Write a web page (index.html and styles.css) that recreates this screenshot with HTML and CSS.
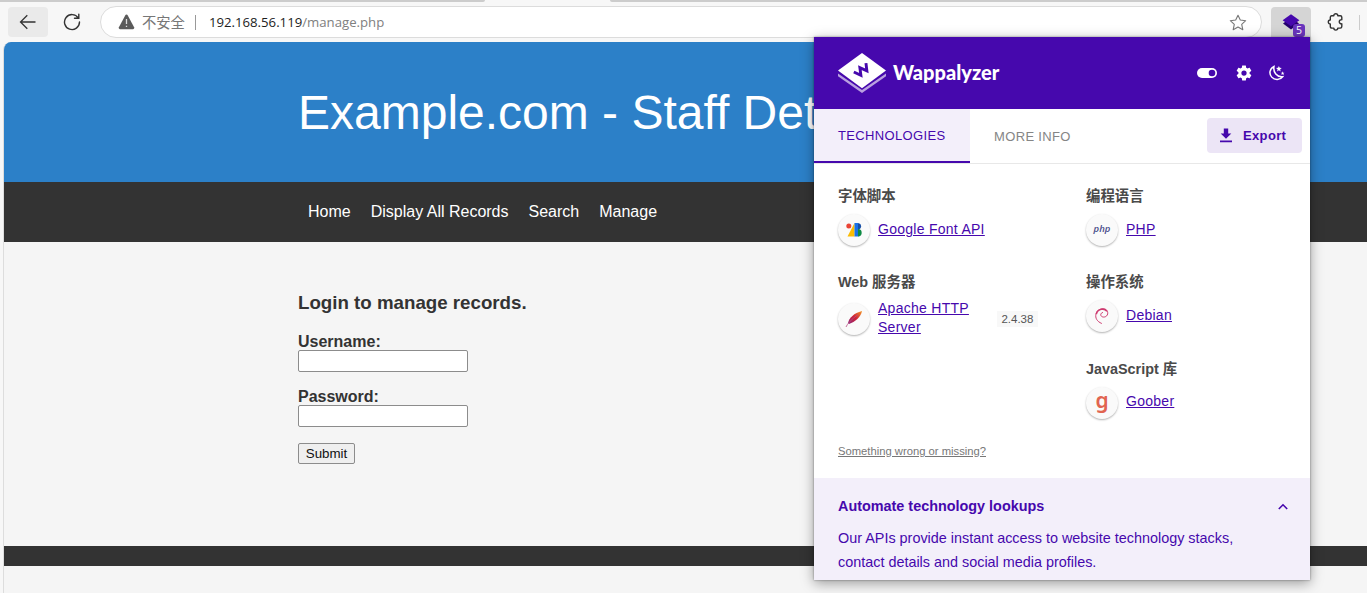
FILE: index.html
```html
<!DOCTYPE html>
<html lang="zh">
<head>
<meta charset="utf-8">
<title>Example.com - Staff Details</title>
<link rel="stylesheet" href="styles.css">
</head>
<body>
<div class="tabstrip"><span class="tab-left"></span><span class="tab-right"></span></div>
<div class="toolbar">
  <span class="back"><svg width="18" height="16" viewBox="0 0 18 16"><path d="M16.5 8H1.5M8.3 1.2 1.5 8l6.8 6.8" fill="none" stroke="#333" stroke-width="1.3"/></svg></span>
  <svg class="reload" width="18" height="18" viewBox="0 0 18 18"><path d="M15.3 5A7.5 7.5 0 1 0 16.500 9M15.800 1.300V5.300H11.500" fill="none" stroke="#333" stroke-width="1.4" stroke-linecap="round"/></svg>
  <div class="address">
    <svg width="17" height="16" viewBox="0 0 17 16"><path d="M8.500 .6Q9.300 .6 9.800 1.500L16.100 13.300Q16.700 15 15.100 15.200H1.900Q.3 15 .9 13.300L7.200 1.500Q7.700 .6 8.500 .6Z" fill="#5a5a5a"/><path d="M8.500 5v5M8.500 11.700v1.300" stroke="#ddd" stroke-width="1.300"/></svg>
    <span class="insecure">不安全</span><span class="divider"></span>
    <span class="url"><b>192.168.56.119</b>/manage.php</span>
    <svg class="star" width="18" height="17" viewBox="0 0 18 17"><path d="M9 1.200 11.300 6l5.400.7-4 3.700 1.100 5.300L9 13.100l-4.800 2.600 1.100-5.300-4-3.700L6.700 6Z" fill="none" stroke="#777" stroke-width="1.100" stroke-linejoin="round"/></svg>
  </div>
  <span class="extension">
    <svg width="18" height="16" viewBox="0 0 18 16"><path d="M9 3.500 17 9.500 9 15.500 1 9.500Z" fill="#25006e"/><path d="M9 .3 17.400 6.300 9 12.300 .6 6.300Z" fill="#4608ad"/></svg>
    <span class="count">5</span>
  </span>
  <svg class="puzzle" width="18" height="18" viewBox="0 0 18 18"><path d="M4.500 2.700H6.800A2 2 0 0 1 10.800 2.700H13.300Q14.800 2.700 14.800 4.200V6.700A2.100 2.100 0 1 0 14.800 10.800V13.600Q14.800 15.100 13.300 15.100H10.800A2 2 0 0 1 6.800 15.100H4.800Q3.300 15.100 3.300 13.600V11A2 2 0 0 1 3.300 7V4.200Q3.300 2.700 4.800 2.700Z" fill="none" stroke="#333" stroke-width="1.400" stroke-linejoin="round"/></svg>
  <span class="edge"></span>
</div>
<div class="site">
  <header>Example.com - Staff Det</header>
  <nav><a>Home</a><a>Display All Records</a><a>Search</a><a>Manage</a></nav>
  <main>
    <h3>Login to manage records.</h3>
    <label>Username:</label><input type="text">
    <label>Password:</label><input type="password">
    <button class="submit">Submit</button>
  </main>
  <footer></footer>
</div>
<section class="popup">
  <div class="brand">
    <svg width="48" height="42" viewBox="0 0 48 42"><path d="M0 21.500 24 38 48 21.500V24.300L24 41 0 24.300Z" fill="#b9a0e0"/><path d="M24 1 48 18.500 24 36.300 0 18.500Z" fill="#fff"/><path d="M-7.500 -3.600-3.700 3.200 0 -3.600 3.700 3.200 7.500 -3.600" transform="translate(24 18.500) rotate(-36)" fill="none" stroke="#4608ad" stroke-width="2.900"/></svg>
    <span class="name">Wappalyzer</span>
    <svg class="toggle" width="20" height="12" viewBox="0 0 20 12"><rect x="0" y="1" width="20" height="10" rx="5" fill="#fff"/><circle cx="15" cy="6" r="3.300" fill="#4608ad"/></svg>
    <svg class="gear" width="18" height="18" viewBox="0 0 24 24"><path fill="#fff" d="M12 15.500A3.500 3.500 0 0 1 8.500 12 3.500 3.500 0 0 1 12 8.500 3.500 3.500 0 0 1 15.500 12 3.500 3.500 0 0 1 12 15.500M19.430 12.970C19.470 12.650 19.500 12.330 19.500 12S19.470 11.340 19.430 11L21.540 9.370C21.730 9.220 21.780 8.950 21.660 8.730L19.660 5.270C19.540 5.050 19.270 4.960 19.050 5.050L16.560 6.050C16.040 5.660 15.500 5.320 14.870 5.070L14.500 2.420C14.460 2.180 14.250 2 14 2H10C9.750 2 9.540 2.180 9.500 2.420L9.130 5.070C8.500 5.320 7.960 5.660 7.440 6.050L4.950 5.050C4.730 4.960 4.460 5.050 4.340 5.270L2.340 8.730C2.210 8.950 2.270 9.220 2.460 9.370L4.570 11C4.530 11.340 4.500 11.670 4.500 12S4.530 12.650 4.570 12.970L2.460 14.630C2.270 14.780 2.210 15.050 2.340 15.270L4.340 18.730C4.460 18.950 4.730 19.030 4.950 18.950L7.440 17.940C7.960 18.340 8.500 18.680 9.130 18.930L9.500 21.580C9.540 21.820 9.750 22 10 22H14C14.250 22 14.460 21.820 14.500 21.580L14.870 18.930C15.500 18.670 16.040 18.340 16.560 17.940L19.050 18.950C19.270 19.030 19.540 18.950 19.660 18.730L21.660 15.270C21.780 15.050 21.730 14.780 21.540 14.630Z"/></svg>
    <svg class="moon" width="18" height="18" viewBox="0 0 24 24"><path d="M8 3.300C2 6 1 13 5 17.500 9 22 16 21.700 19.500 17 12 18 6.500 11 8 3.300Z" fill="none" stroke="#fff" stroke-width="2"/><path fill="#fff" d="m14.500 2.500 1.100 2.600 2.800.2-2.200 1.800.7 2.800-2.400-1.500-2.400 1.500.7-2.800-2.200-1.800 2.800-.2ZM19.500 9.800l.7 1.700 1.800.1-1.400 1.200.5 1.800-1.600-1-1.600 1 .5-1.800-1.400-1.200 1.800-.1Z"/></svg>
  </div>
  <div class="tabs">
    <span class="tab active">TECHNOLOGIES</span><span class="tab">MORE INFO</span>
    <span class="export"><svg width="12" height="15" viewBox="0 0 12 15"><path d="M3.800 .5H8.200V5.500H11.300L6 10.800.7 5.500H3.800ZM0 12.600H12V14.200H0Z" fill="#4608ad"/></svg>Export</span>
  </div>
  <div class="tech">
    <div class="column">
      <div class="group"><h4>字体脚本</h4><div class="item"><i class="badge"><svg width="17" height="14" viewBox="0 0 17 14"><path d="M8.500 0V13.500H1.500Z" fill="#fbbc04"/><circle cx="2.800" cy="3" r="2.500" fill="#ea4335"/><path d="M8.500 0H12.500V13.500H8.500Z" fill="#1a73e8"/><path d="M12 .2A3.100 3.100 0 0 1 12 6.400Z" fill="#174ea6"/><path d="M12 6A3.700 3.700 0 0 1 12 13.400Z" fill="#0d8a43"/></svg></i><a>Google Font API</a></div></div>
      <div class="group tall"><h4>Web 服务器</h4><div class="item"><i class="badge"><svg width="18" height="18" viewBox="0 0 18 18"><defs><linearGradient id="feather" x1="0" y1="1" x2="1" y2="0"><stop offset="0" stop-color="#89277f"/><stop offset=".5" stop-color="#d02235"/><stop offset="1" stop-color="#f39a27"/></linearGradient></defs><path d="M3 13C4 8 9 3 17 1 16 7 10 12 4 14Z" fill="url(#feather)"/><path d="M1 17Q3 12 13 4.500" fill="none" stroke="#b64f83" stroke-width=".8"/></svg></i><a>Apache HTTP<br>Server</a><span class="version">2.4.38</span></div></div>
    </div>
    <div class="column">
      <div class="group"><h4>编程语言</h4><div class="item"><i class="badge php">php</i><a>PHP</a></div></div>
      <div class="group"><h4>操作系统</h4><div class="item"><i class="badge"><svg width="16" height="18" viewBox="0 0 16 18"><path d="M7.800 16.500C3 14.500 1 11 2 7 3.300 1.500 10.500.2 13.300 4.200 15 8 11.500 11 8.300 9.800 6 8.800 6.300 6 9 5.400" fill="none" stroke="#ce3b70" stroke-width="1"/><path d="M2.300 7C3.800 1.600 10.500.8 13 4.300" fill="none" stroke="#ce3b70" stroke-width="1.600"/></svg></i><a>Debian</a></div></div>
      <div class="group"><h4>JavaScript 库</h4><div class="item"><i class="badge goober">g</i><a>Goober</a></div></div>
    </div>
  </div>
  <a class="missing">Something wrong or missing?</a>
  <div class="promo">
    <div class="promo-title">Automate technology lookups<svg width="10" height="7" viewBox="0 0 10 7"><path d="M.8 6 5 1.800 9.200 6" fill="none" stroke="#4608ad" stroke-width="1.600"/></svg></div>
    <p>Our APIs provide instant access to website technology stacks,<br>contact details and social media profiles.</p>
  </div>
</section>
</body>
</html>
```
FILE: styles.css
```css
* { box-sizing: border-box; }
body { margin: 0; width: 1367px; height: 593px; overflow: hidden; position: relative; background: #f7f7f7; font-family: "Liberation Sans", "Noto Sans CJK SC", sans-serif; }
svg { flex: none; display: block; }
.tabstrip { display: flex; justify-content: space-between; height: 2px; }
.tab-left { width: 485px; background: #ccc; border-bottom-right-radius: 4px; }
.tab-right { width: 757px; background: #ccc; border-bottom-left-radius: 4px; }
.toolbar { height: 40px; display: flex; align-items: center; }
.back { width: 40px; height: 30px; margin-left: 8px; border-radius: 4px; background: #eaeaea; display: flex; align-items: center; justify-content: center; }
.reload { margin-left: 15px; }
.address { margin-left: 19px; width: 1162px; height: 32px; border: 1px solid #dcdcdc; border-radius: 16px; background: #fff; display: flex; align-items: center; padding: 0 14px 0 17px; }
.insecure { font: 14.3px/20px "Noto Sans CJK SC", sans-serif; color: #777; margin-left: 7px; padding-bottom: 1px; }
.divider { width: 1px; height: 15px; background: #999; margin: 0 13px 0 10px; }
.url { font: 13.2px "Open Sans", sans-serif; color: #808080; }
.url b { font-weight: 400; color: #1d1d1d; }
.star { margin-left: auto; }
.extension { position: relative; align-self: flex-start; width: 40px; height: 36px; margin: 5px 0 0 9px; padding: 7px 0 0 11px; background: #d5d5d5; border-radius: 4px; }
.count { position: absolute; left: 22px; top: 17px; width: 12px; height: 13px; border-radius: 3px; background: #6a35bd; color: #fff; font: 10.5px/13px "Open Sans", sans-serif; text-align: center; }
.puzzle { margin-left: 16px; }
.edge { width: 1px; height: 15px; margin-left: 14px; background: #ccc; }
.site { margin-left: 3px; height: 551px; background: #f5f5f5; border-left: 1px solid #ddd; border-top-left-radius: 8px; overflow: hidden; }
header { height: 140px; padding-left: 294px; background: #2c80c8; color: #fff; font-size: 48px; line-height: 142px; white-space: nowrap; }
nav { display: flex; gap: 20px; height: 60px; padding-left: 304px; background: #333; color: #fff; font-size: 16px; line-height: 59px; }
main { height: 304px; padding: 50px 0 0 294px; display: flex; flex-direction: column; align-items: flex-start; color: #333; font-weight: 700; }
h3 { margin: 0 0 19px; font-size: 18.720px; line-height: 22px; }
label { font-size: 16px; line-height: 18px; }
input { width: 170px; height: 22px; margin: -1px 0 16px; background: #fff; border: 1px solid #8c8c8c; border-radius: 2px; }
.submit { width: 57px; height: 21px; padding: 0; background: #efefef; border: 1px solid #8c8c8c; border-radius: 2px; color: #111; font: 13.330px "Liberation Sans", sans-serif; }
footer { height: 20px; background: #333; }
.popup { position: absolute; left: 814px; top: 37px; width: 496px; height: 543px; background: #fff; box-shadow: 0 3px 12px rgba(0,0,0,.38), 0 0 2px rgba(0,0,0,.4); color: #4a4a4a; }
.brand { display: flex; align-items: center; height: 72px; padding: 0 24px; background: #4608ad; }
.name { margin-left: 7px; color: #fff; font: 900 20px/24px Lato, sans-serif; padding-bottom: 3px; }
.toggle { margin-left: auto; }
.gear { margin-left: 18px; }
.moon { margin: 0 0 0 15px; }
.tabs { display: flex; height: 55px; border-bottom: 1px solid #e8e8e8; font-size: 13px; letter-spacing: .35px; color: #858585; }
.tab { padding: 0 24px; line-height: 55px; }
.active { width: 156px; height: 54px; line-height: 54px; background: #f3effa; border-bottom: 2px solid #4608ad; color: #4608ad; }
.export { width: 95px; height: 35px; margin: 9px 8px 0 auto; padding-left: 13px; display: flex; align-items: center; gap: 11px; border-radius: 4px; background: #ece5f6; color: #4608ad; font-weight: 700; }
.tech { display: flex; height: 273px; padding: 21px 0 0 24px; }
.column { flex: none; width: 248px; }
.column + .column { width: 224px; }
.group { height: 86.300px; }
h4 { margin: 0; font-size: 14.400px; line-height: 22px; color: #4a4a4a; }
.item { display: flex; align-items: center; height: 46px; }
.tall .item { height: 52px; }
.badge { flex: none; width: 32px; height: 32px; margin-right: 8px; border-radius: 50%; background: #fafafa; box-shadow: 0 1px 2px rgba(0,0,0,.3); display: flex; align-items: center; justify-content: center; }
.item a { font-size: 14px; line-height: 19px; letter-spacing: .270px; color: #4608ad; text-decoration: underline; padding-bottom: 2px; }
.version { margin-left: 28px; width: 41px; height: 16px; background: #f8f8f8; color: #555; font-size: 11.500px; line-height: 16px; text-align: center; }
.php { font: italic 600 9.5px/12px "Open Sans", sans-serif; color: #484c89; padding-bottom: 2px; }
.goober { font: 600 21px/24px "Noto Sans", sans-serif; color: #e16450; padding-bottom: 6px; }
.missing { display: block; height: 41px; padding: 5px 24px 0; font-size: 11.240px; line-height: 18px; color: #777; text-decoration: underline; }
.promo { height: 102px; padding: 16px 22px 0 24px; background: #f3effa; color: #4608ad; font-size: 14.400px; line-height: 24px; }
.promo-title { display: flex; align-items: center; justify-content: space-between; font-weight: 700; }
p { margin: 8px 0 0; white-space: nowrap; }
```
